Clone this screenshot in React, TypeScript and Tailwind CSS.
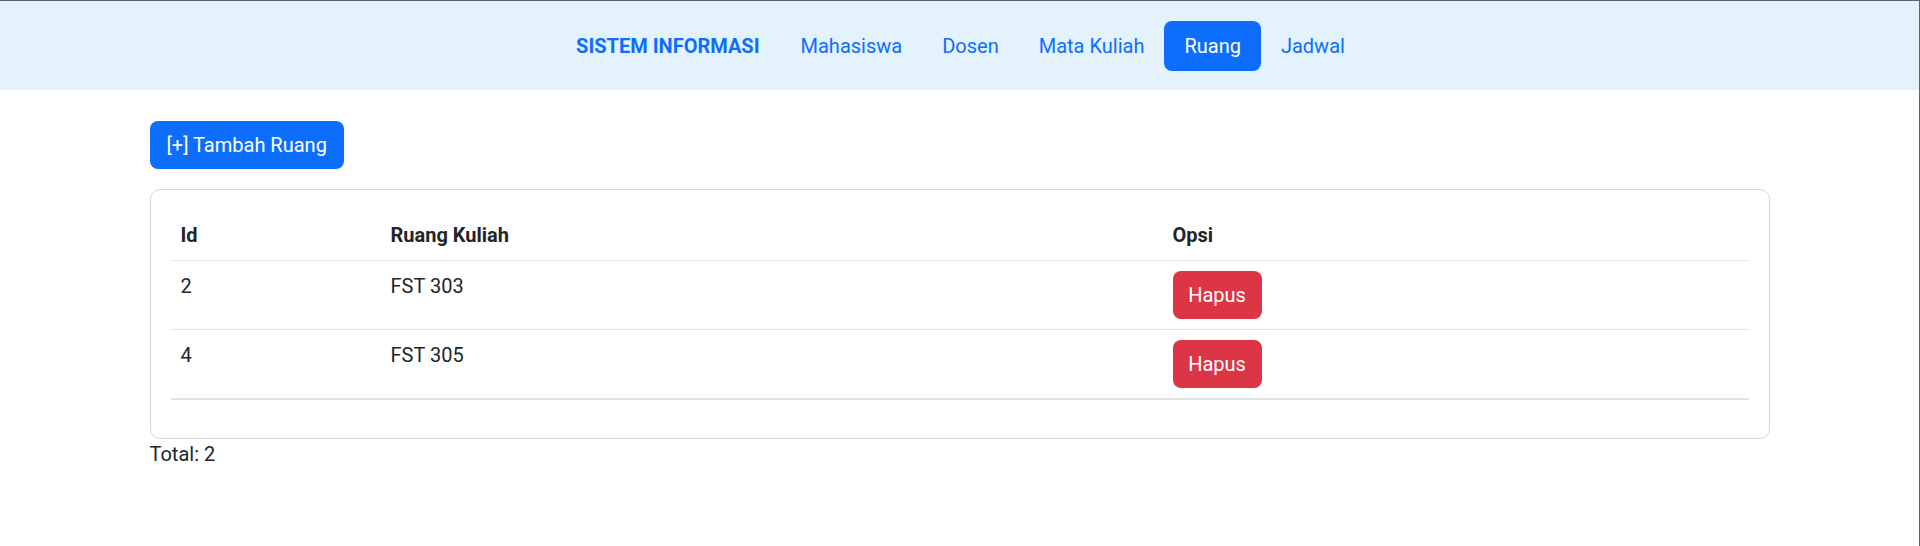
import React from "react";

const font = { fontFamily: '"Segoe UI", Roboto, "Liberation Sans", Arial, sans-serif' };

const links = ["Mahasiswa", "Dosen", "Mata Kuliah", "Ruang", "Jadwal"];

const rows = [
  { id: 2, nama: "FST 303" },
  { id: 4, nama: "FST 305" },
];

function Navbar() {
  return (
    <nav className="flex h-[89px] items-center justify-center bg-[#e3f2fd] pl-[22px]">
      <span className="mr-[21px] text-[20px] font-bold leading-[30px] text-[#0d6efd]">
        SISTEM INFORMASI
      </span>
      {links.map((l) => (
        <a
          key={l}
          href="#"
          className={
            l === "Ruang"
              ? "rounded-lg bg-[#0d6efd] px-[20px] py-[10px] text-[20px] leading-[30px] text-white"
              : "px-[20px] py-[10px] text-[20px] leading-[30px] text-[#0d6efd]"
          }
        >
          {l}
        </a>
      ))}
    </nav>
  );
}

export default function App() {
  return (
    <div
      className="min-h-[546px] border-t border-r border-[#5f6368] bg-white text-[20px] leading-[30px] text-[#212529]"
      style={font}
    >
      <Navbar />
      <div className="mx-auto w-[1620px]">
        <button className="mt-[31px] h-[48px] rounded-lg bg-[#0d6efd] px-[17px] text-[20px] leading-[30px] text-white">
          [+] Tambah Ruang
        </button>
        <div className="mt-[20px] rounded-[10px] border border-[#d6d6d6] px-[20px] pt-[20px] pb-[38px]">
          <table className="w-full border-collapse border-b-2 border-[#dee2e6] text-left">
            <thead>
              <tr className="border-b border-[#dee2e6]">
                <th className="w-[210px] px-[10px] py-[10px] align-top font-bold">Id</th>
                <th className="w-[782px] px-[10px] py-[10px] align-top font-bold">Ruang Kuliah</th>
                <th className="px-[10px] py-[10px] align-top font-bold">Opsi</th>
              </tr>
            </thead>
            <tbody>
              {rows.map((r, i) => (
                <tr
                  key={r.id}
                  className={i < rows.length - 1 ? "border-b border-[#dee2e6]" : ""}
                >
                  <td className="px-[10px] py-[10px] align-top">{r.id}</td>
                  <td className="px-[10px] py-[10px] align-top">{r.nama}</td>
                  <td className="px-[10px] py-[10px] align-top">
                    <button className="h-[48px] w-[89px] rounded-lg bg-[#dc3545] text-[20px] leading-[30px] text-white">
                      Hapus
                    </button>
                  </td>
                </tr>
              ))}
            </tbody>
          </table>
        </div>
        <div>Total: 2</div>
      </div>
    </div>
  );
}
